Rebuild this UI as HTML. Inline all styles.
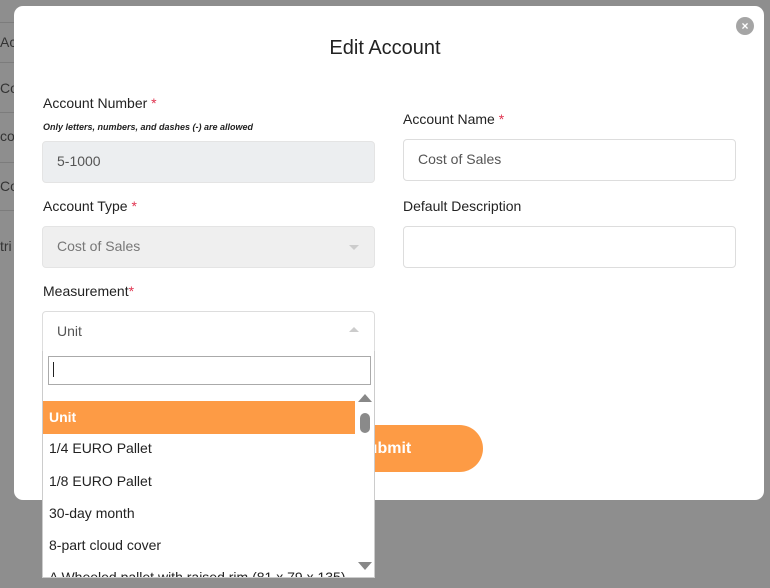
<!DOCTYPE html>
<html><head><style>
*{box-sizing:border-box;margin:0;padding:0}
body{width:770px;height:588px;background:#8e8e8e;font-family:"Liberation Sans",sans-serif;position:relative;overflow:hidden}
.a{position:absolute}
.bgt{position:absolute;left:0;font-size:14px;color:#333}
.bgl{position:absolute;left:0;width:14px;height:1px;background:#7c7c7c}
.modal{left:14px;top:6px;width:750px;height:494px;background:#fff;border-radius:9px}
.lbl{font-size:14px;color:#222}
.req{color:#e0334f}
.inp{border:1px solid #ddd;border-radius:4px;height:42px;font-size:14px;color:#555;padding:0 14px;line-height:38px}
.opt{position:absolute;left:6px;font-size:14px;color:#222}
</style></head><body>
<div class="bgt" style="top:34px">Ac</div>
<div class="bgt" style="top:80px">Co</div>
<div class="bgt" style="top:128px">cos</div>
<div class="bgt" style="top:178px">Co</div>
<div class="bgt" style="top:238px">tri</div>
<div class="bgl" style="top:22px"></div><div class="bgl" style="top:62px"></div><div class="bgl" style="top:112px"></div><div class="bgl" style="top:162px"></div><div class="bgl" style="top:210px"></div>
<div class="a modal"></div>
<div class="a" style="left:736px;top:17px;width:18px;height:18px;border-radius:50%;background:#a5a5a5;color:#fff;font-size:12px;font-weight:bold;text-align:center;line-height:18px">×</div>
<div class="a" style="left:0;width:770px;top:37px;text-align:center;font-size:20px;color:#222">Edit Account</div>
<div class="a lbl" style="left:43px;top:95px">Account Number <span class="req">*</span></div>
<div class="a" style="left:43px;top:122px;font-size:9px;font-style:italic;font-weight:bold;color:#222">Only letters, numbers, and dashes (-) are allowed</div>
<div class="a inp" style="left:42px;top:141px;width:333px;background:#eceef0;border-color:#e4e4e4">5-1000</div>
<div class="a lbl" style="left:43px;top:198px">Account Type <span class="req">*</span></div>
<div class="a inp" style="left:42px;top:226px;width:333px;background:#efefef;border-color:#e4e4e4;color:#777">Cost of Sales</div>
<div class="a" style="left:349px;top:245px;border:5px solid transparent;border-top-color:#ccc;border-bottom:0"></div>
<div class="a lbl" style="left:43px;top:283px">Measurement<span class="req">*</span></div>
<div class="a inp" style="left:42px;top:311px;width:333px;border-radius:4px 4px 0 0;height:41px;color:#555">Unit</div>
<div class="a" style="left:349px;top:327px;border:5px solid transparent;border-bottom-color:#ccc;border-top:0"></div>
<div class="a lbl" style="left:403px;top:111px">Account Name <span class="req">*</span></div>
<div class="a inp" style="left:403px;top:139px;width:333px">Cost of Sales</div>
<div class="a lbl" style="left:403px;top:198px">Default Description</div>
<div class="a inp" style="left:403px;top:226px;width:333px"></div>
<div class="a" style="left:330px;top:425px;width:153px;height:47px;border-radius:24px;background:#fd9b45;color:#fff;font-weight:bold;font-size:16px;line-height:47px;padding-left:27px">Submit</div>
<div class="a" style="left:42px;top:351px;width:333px;height:227px;background:#fff;border:1px solid #ccc;border-top:0;overflow:hidden">
 <div class="a" style="left:5px;top:5px;width:323px;height:29px;border:1px solid #aaa"></div>
 <div class="a" style="left:10px;top:11px;width:1px;height:15px;background:#222"></div>
 <div class="a" style="left:0;top:50px;width:312px;height:33px;background:#fd9b45"></div>
 <div class="opt" style="top:58px;color:#fff;font-weight:bold">Unit</div>
 <div class="opt" style="top:89px">1/4 EURO Pallet</div>
 <div class="opt" style="top:122px">1/8 EURO Pallet</div>
 <div class="opt" style="top:154px">30-day month</div>
 <div class="opt" style="top:186px">8-part cloud cover</div>
 <div class="opt" style="top:218px">A Wheeled pallet with raised rim (81 x 79 x 135)</div>
 <div class="a" style="left:312px;top:40px;width:20px;height:187px;background:#fff"></div>
 <div class="a" style="left:315px;top:43px;border:7px solid transparent;border-bottom:8px solid #888;border-top:0"></div>
 <div class="a" style="left:317px;top:62px;width:10px;height:20px;border-radius:5px;background:#8a8a8a"></div>
 <div class="a" style="left:315px;top:211px;border:7px solid transparent;border-top:8px solid #888;border-bottom:0"></div>
</div>
</body></html>
